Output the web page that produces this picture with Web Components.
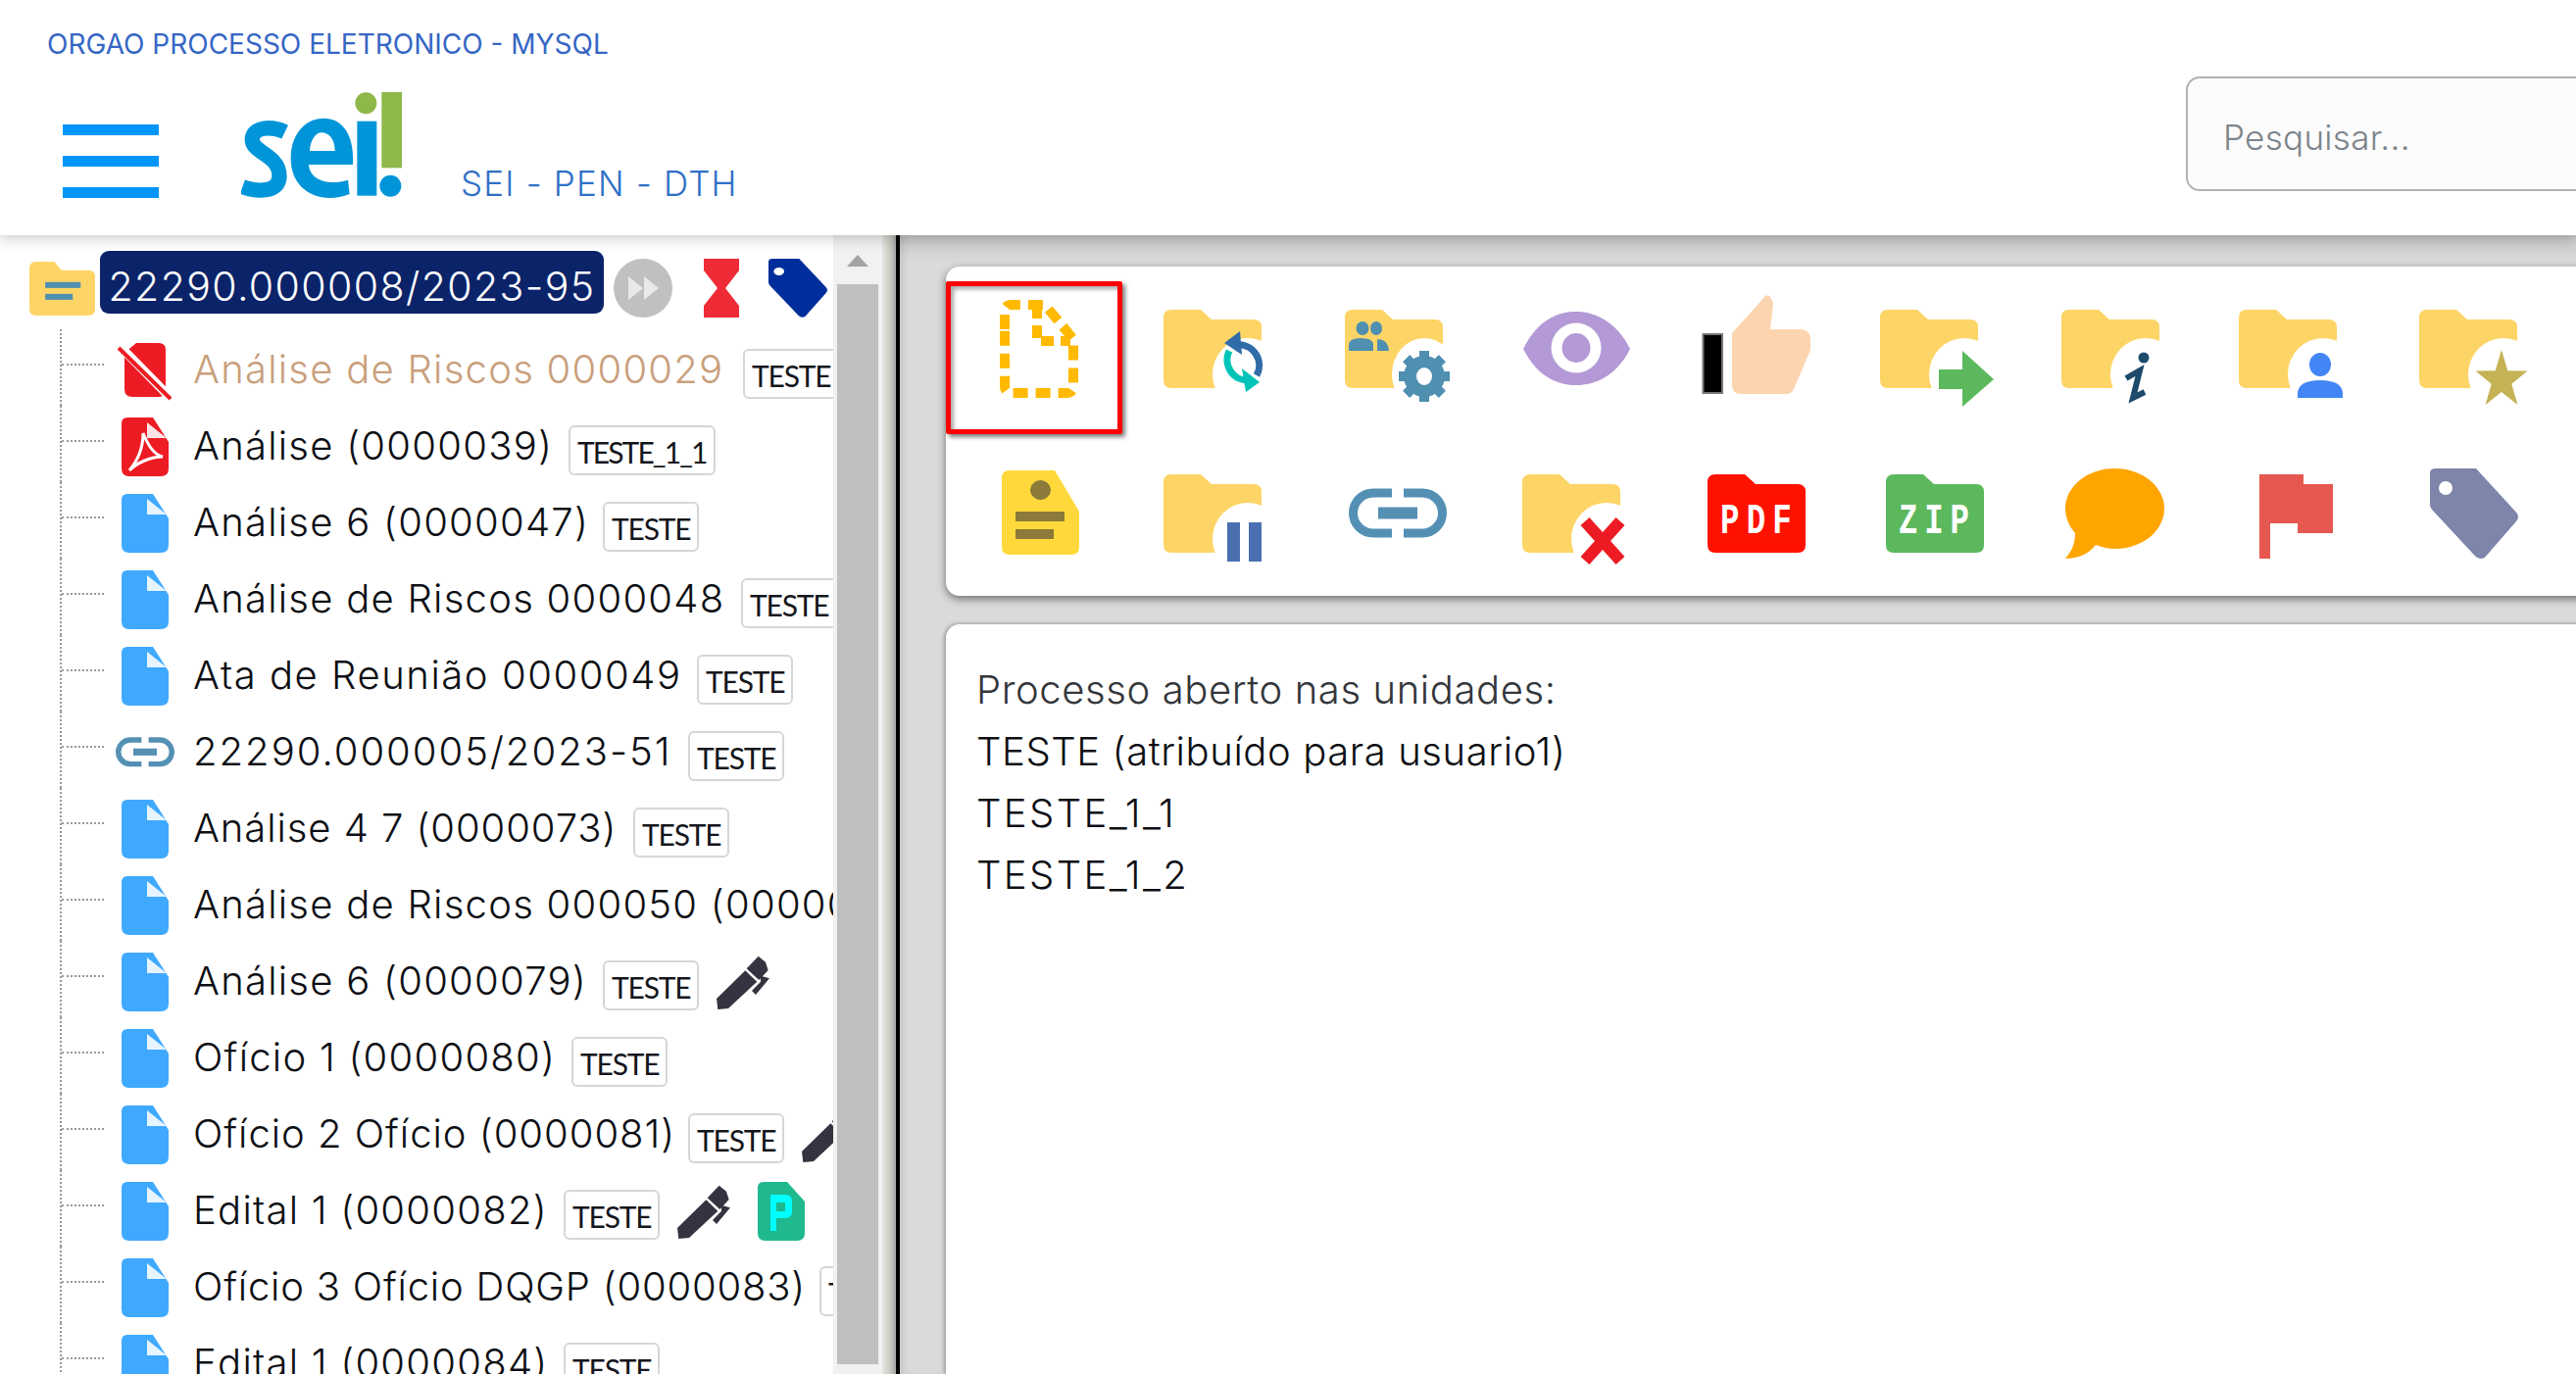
<!DOCTYPE html>
<html lang="pt-BR"><head><meta charset="utf-8"><title>SEI</title>
<style>html,body{margin:0;height:100%;overflow:hidden;background:#fff;font-family:Inter,"Liberation Sans",sans-serif}</style>
</head><body>
<sei-app>
  <sei-header slot="header"></sei-header>
  <sei-tree slot="tree" root="22290.000008/2023-95">
    <tree-row icon="slash" label="Análise de Riscos 0000029" muted w="541"><sei-badge>TESTE</sei-badge></tree-row>
    <tree-row icon="pdf" label="Análise (0000039)" w="363"><sei-badge style="letter-spacing:-1.9px">TESTE_1_1</sei-badge></tree-row>
    <tree-row icon="doc" label="Análise 6 (0000047)" w="398"><sei-badge>TESTE</sei-badge></tree-row>
    <tree-row icon="doc" label="Análise de Riscos 0000048" w="539"><sei-badge>TESTE</sei-badge></tree-row>
    <tree-row icon="doc" label="Ata de Reunião 0000049" w="494" ls="1.55"><sei-badge>TESTE</sei-badge></tree-row>
    <tree-row icon="link" label="22290.000005/2023-51" w="485" ls="2"><sei-badge>TESTE</sei-badge></tree-row>
    <tree-row icon="doc" label="Análise 4 7 (0000073)" w="429" ls=".93"><sei-badge>TESTE</sei-badge></tree-row>
    <tree-row icon="doc" label="Análise de Riscos 000050 (0000074)" w="720"><sei-badge>TESTE</sei-badge></tree-row>
    <tree-row icon="doc" label="Análise 6 (0000079)" w="398"><sei-badge>TESTE</sei-badge><sei-icon name="pen"></sei-icon></tree-row>
    <tree-row icon="doc" label="Ofício 1 (0000080)" w="366"><sei-badge>TESTE</sei-badge></tree-row>
    <tree-row icon="doc" label="Ofício 2 Ofício (0000081)" w="485" ls=".98"><sei-badge>TESTE</sei-badge><sei-icon name="pen"></sei-icon></tree-row>
    <tree-row icon="doc" label="Edital 1 (0000082)" w="358"><sei-badge>TESTE</sei-badge><sei-icon name="pen"></sei-icon><sei-icon name="p"></sei-icon></tree-row>
    <tree-row icon="doc" label="Ofício 3 Ofício DQGP (0000083)" w="619" ls=".8"><sei-badge>TESTE</sei-badge></tree-row>
    <tree-row icon="doc" label="Edital 1 (0000084)" w="358"><sei-badge>TESTE</sei-badge></tree-row>
  </sei-tree>
  <sei-tools slot="main"></sei-tools>
  <sei-info slot="main">
    <p>Processo aberto nas unidades:</p>
    <p class="k">TESTE (atribuído para usuario1)</p>
    <p class="k" style="letter-spacing:2.4px">TESTE_1_1</p>
    <p class="k" style="letter-spacing:2.4px">TESTE_1_2</p>
  </sei-info>
</sei-app>
<script>
const FOLDER='<path d="M8 0H38L49 10H92Q100 10 100 18V72Q100 80 92 80H8Q0 80 0 72V8Q0 0 8 0Z" fill="COLOR"/>';
const folder=(x,y,badge,c='#fdd567',cut=true)=>`<g transform="translate(${x} ${y})">${FOLDER.replace('COLOR',c)}${cut?'<ellipse cx="86" cy="66" rx="36" ry="37" fill="#fff"/>':''}${badge||''}</g>`;
const tagPath='M0 6Q0 0 6 0H47L88 58Q92 64 88 70L56 118Q50 122 46 116L3 56Q0 52 0 48Z';
let gear='';
for(let a=0;a<360;a+=45)gear+=`<rect x="76" y="42" width="10" height="12" fill="#4f8fb0" transform="rotate(${a} 81 68)"/>`;
const star=(()=>{let p=[];for(let i=0;i<10;i++){const r=i%2?12:31,a=-Math.PI/2+i*Math.PI/5;p.push((84+r*Math.cos(a)*.9).toFixed(1)+','+(72+r*Math.sin(a)).toFixed(1));}return p.join(' ');})();
const TOOL={
 newdoc:`<g transform="translate(20 6)" fill="none" stroke="#ffb900" stroke-width="10"><path stroke-dasharray="15 8" d="M5 30V12Q5 5 12 5H46L75 40V88Q75 95 68 95H12Q5 95 5 88Z"/><path stroke-dasharray="13 7" d="M38 6V42H72"/></g>`,
 sync:folder(4,16,'<g fill="none" stroke-width="7"><path d="M74 36A21 21 0 0 1 95 67" stroke="#2f6ca8"/><path d="M88 72A21 21 0 0 1 67 42" stroke="#00c4b8"/></g><path d="M78 22L80 46L62 34Z" fill="#2f6ca8"/><path d="M84 84L80 60L98 74Z" fill="#00c4b8"/>'),
 users:`<g transform="translate(6 16)">${FOLDER.replace('COLOR','#fdd567')}<ellipse cx="81" cy="66" rx="33" ry="37" fill="#fff"/><g fill="#4f8fb0"><ellipse cx="18" cy="19" rx="6.5" ry="7"/><ellipse cx="32" cy="19" rx="6" ry="7"/><path d="M4 42V36Q4 29 16 29Q29 29 29 36V42Z"/><path d="M33 42V30Q44 30 45 42Z"/>${gear}<circle cx="81" cy="68" r="21"/></g><ellipse cx="81" cy="68" rx="8" ry="9" fill="#fff"/></g>`,
 eye:`<path d="M5 56C20 25 42 18 59 18C78 18 100 28 114 56C100 84 78 93 59 93C42 93 20 86 5 56Z" fill="#b39ad6"/><circle cx="59" cy="55" r="25.5" fill="#fff"/><ellipse cx="59" cy="55" rx="14.5" ry="15" fill="#b39ad6"/>`,
 thumb:`<rect x="5.5" y="41" width="19.5" height="60" fill="#000" stroke="#777" stroke-width="2"/><path d="M35 40L69 2Q72 0 74 3L77 9L74 36H104Q115 36 115 47V57L98 97Q96 102 90 102H44Q35 102 35 93Z" fill="#fcd5b0"/>`,
 move:folder(3,16,'<path d="M60 61H84V42L116 71L84 99V81H60Z" fill="#5cb85c"/>'),
 info:folder(5,16,'<circle cx="84" cy="49" r="5.5" fill="#1e4a6b"/><path d="M66 70L80 62L73 90L85 84" fill="none" stroke="#1e4a6b" stroke-width="6"/>'),
 person:folder(3,16,'<ellipse cx="83" cy="56" rx="11" ry="12" fill="#4285f4"/><path d="M60 90V86Q60 72 83 72Q106 72 106 86V90Z" fill="#4285f4"/>'),
 star:folder(4,16,`<polygon points="${star}" fill="#c4b255"/>`),
 note:`<g transform="translate(22 12)"><path d="M8 0H54L79 42V78Q79 86 71 86H8Q0 86 0 78V8Q0 0 8 0Z" fill="#ffd93b"/><ellipse cx="39.5" cy="20" rx="10.5" ry="10" fill="#8b7a3a"/><rect x="14" y="42" width="50" height="10" fill="#8b7a3a"/><rect x="14" y="60" width="39" height="10" fill="#8b7a3a"/></g>`,
 pause:folder(4,16,'<rect x="65" y="49" width="13" height="40" fill="#4a6fb0"/><rect x="87" y="49" width="13" height="40" fill="#4a6fb0"/>'),
 link:`<g transform="translate(10 30)" fill="none" stroke="#5490b4" stroke-width="9"><path d="M44 5H25A20 20 0 0 0 25 46H44"/><path d="M56 5H75A20 20 0 0 1 75 46H56"/><path d="M30 25.5H70" stroke-width="12"/></g>`,
 del:folder(4,16,'<path d="M64 48L100 88M100 48L64 88" stroke="#ed1c24" stroke-width="12" fill="none"/>'),
 pdf:`<g transform="translate(10 16)">${FOLDER.replace('COLOR','#ff1100')}<text transform="translate(13 60) scale(.72 1)" font-family="Liberation Mono" font-weight="700" font-size="45" fill="#fff" textLength="101" lengthAdjust="spacing">PDF</text></g>`,
 zip:`<g transform="translate(9 16)">${FOLDER.replace('COLOR','#5cb85c')}<text transform="translate(13 60) scale(.72 1)" font-family="Liberation Mono" font-weight="700" font-size="45" fill="#fff" textLength="100" lengthAdjust="spacing">ZIP</text></g>`,
 chat:`<path d="M59.5 10C87 10 110 28 110 51C110 74 87 92 60 92C52 92 46 90 40 88C33 97 22 102 9 102C16 94 19 86 19 76C13 69 9 60 9 51C9 28 32 10 59.5 10Z" fill="#ffa500"/>`,
 flag:`<path d="M24 16H69V26H99V76H63V66H35V102H24Z" fill="#e5574f"/>`,
 tag:`<g transform="translate(15 10) scale(1 .77)"><path d="${tagPath}" fill="#7e84aa"/><ellipse cx="16" cy="26" rx="7" ry="9" fill="#fff"/></g>`
};
const ICON={
 doc:{w:48,h:60,s:`<path d="M6 0H32L48 25V52Q48 60 40 60H8Q0 60 0 52V6Q0 0 6 0Z" fill="#3fa9ff"/><path d="M26 5V21H46Z" fill="#e6f4ff"/>`},
 pdf:{w:48,h:60,s:`<path d="M6 0H32L48 25V52Q48 60 40 60H8Q0 60 0 52V6Q0 0 6 0Z" fill="#ed1c24"/><path d="M26 5V21H46Z" fill="#fde4e4"/><path d="M22 16C22 28 18 42 8 54C16 46 30 40 42 40C32 38 26 26 22 16Z" fill="none" stroke="#fff" stroke-width="3"/>`},
 slash:{w:48,h:60,s:`<path d="M15 2H38Q45 2 45 9V50Q45 57 38 57H11Q3 57 3 49V12Z" fill="#ed1c24"/><path d="M-1 6L52 60" stroke="#fff" stroke-width="9"/><path d="M-3 7L50 59" stroke="#ed1c24" stroke-width="4"/>`},
 link:{w:60,h:60,vb:'0 0 60 60',s:`<g transform="translate(0 14) scale(.6)" fill="none" stroke="#5490b4" stroke-width="9"><path d="M44 5H25A20 20 0 0 0 25 46H44"/><path d="M56 5H75A20 20 0 0 1 75 46H56"/><path d="M30 25.5H70" stroke-width="12"/></g>`,m:'0 -6px'},
 pen:{w:54,h:55,vb:'0 0 162 165',s:`<g fill="#33343f"><path d="M0 132L88 46L124 80L36 162L4 165Z"/><path d="M92 40L128 2L150 20L158 45L130 75Z"/><path d="M135 62L162 70L120 120L108 108L135 80Z"/></g>`,m:'3px 0 0 18px'},
 p:{w:48,h:60,s:`<path d="M6 0H30L48 20V52Q48 60 40 60H8Q0 60 0 52V6Q0 0 6 0Z" fill="#1fb88f"/><path d="M13 50V13H28Q35 13 35 20V30Q35 37 28 37H19V50Z" fill="#0ff" fill-rule="evenodd"/><rect x="19" y="21" width="9" height="9" fill="#1fb88f"/>`,m:'0 0 0 28px'}
};
function shadow(el,html){el.attachShadow({mode:'open'}).innerHTML=html;}
customElements.define('sei-icon',class extends HTMLElement{
 connectedCallback(){const i=ICON[this.getAttribute('name')];
  shadow(this,`<style>:host{display:block;flex:none;line-height:0;margin:${i.m||0}}svg{overflow:visible}</style><svg width="${i.w}" height="${i.h}" viewBox="${i.vb||`0 0 ${i.w} ${i.h}`}">${i.s}</svg>`);}
});
customElements.define('sei-badge',class extends HTMLElement{
 constructor(){super();shadow(this,`<style>:host{display:block;flex:none;box-sizing:border-box;height:51px;margin:8px 0 0 0;padding:0 7px;border:2px solid #d6d6d6;border-radius:6px;font-family:Lato,sans-serif;font-size:30px;line-height:50px;color:#14161c;letter-spacing:-1.2px;white-space:nowrap;background:#fff}</style><slot></slot>`);}
});
customElements.define('tree-row',class extends HTMLElement{
 connectedCallback(){const m=this.hasAttribute('muted');
  shadow(this,`<style>:host{display:flex;align-items:flex-start;box-sizing:border-box;height:78px;margin-left:61px;padding-top:12px;border-left:2px dotted #999;overflow:hidden;white-space:nowrap}
  .c{flex:none;width:43px;margin:23px 18px 0 0;border-top:2px dotted #999}
  .t{flex:none;margin:-1px 0 0 25px;font-size:40px;line-height:60px;font-weight:300;color:${m?'#c99f7c':'#0d0f14'};width:${this.getAttribute('w')}px;letter-spacing:${this.getAttribute('ls')||1.25}px}
  ::slotted(sei-badge){margin-left:20px}</style>
  <span class="c"></span><sei-icon name="${this.getAttribute('icon')}"></sei-icon><span class="t">${this.getAttribute('label')}</span><slot></slot>`);}
});
customElements.define('sei-tree',class extends HTMLElement{
 connectedCallback(){shadow(this,`<style>:host{display:flex;width:900px;flex:none;height:100%;background:#fff}
 .body{width:850px;flex:none;overflow:hidden;padding-top:16px;box-sizing:border-box}
 .root{display:flex;align-items:flex-start;height:80px;padding-left:30px}
 .num{margin-left:5px;height:64px;width:514px;box-sizing:border-box;background:#0a2369;border-radius:9px;color:#fff;font-size:41px;font-weight:300;line-height:72px;text-align:center;white-space:nowrap;letter-spacing:1.4px;overflow:hidden}
 .root svg{flex:none}
 .bar{flex:1;background:#f1f1f1;display:flex;flex-direction:column;align-items:center;padding:0 4px 10px}
 .up{height:50px;flex:none;display:flex;align-items:flex-start;padding-top:20px;box-sizing:border-box}
 .tri{width:0;height:0;border:solid transparent;border-width:0 11px 12px;border-bottom-color:#a3a3a3}
 .th{flex:1;align-self:stretch;background:#bfbfbf}
 </style>
 <div class="body"><div class="root">
 <svg width="67" height="55" viewBox="0 0 100 82" style="margin-top:11px"><path d="M10 0H38L49 13H90Q100 13 100 23V72Q100 82 90 82H10Q0 82 0 72V10Q0 0 10 0Z" fill="#fdd567"/><rect x="24" y="31" width="54" height="9" fill="#4f8fb0"/><rect x="24" y="49" width="42" height="9" fill="#4f8fb0"/></svg>
 <div class="num">${this.getAttribute('root')}</div>
 <svg width="60" height="60" viewBox="0 0 60 60" style="margin:8px 0 0 10px"><circle cx="30" cy="30" r="30" fill="#c0c0c0"/><path d="M15 18L30 30L15 42ZM31 18L46 30L31 42Z" fill="#e9e9e9"/></svg>
 <svg width="36" height="60" viewBox="0 0 36 60" style="margin:8px 0 0 32px"><path d="M0 0H36V12L22 30L36 48V60H0V48L14 30L0 12Z" fill="#ef2b38"/></svg>
 <svg width="60" height="60" viewBox="0 0 90 120" preserveAspectRatio="none" style="margin:8px 0 0 30px"><path d="${tagPath}" fill="#002d9c"/><ellipse cx="16" cy="26" rx="8" ry="8" fill="#fff"/></svg>
 </div><slot></slot></div>
 <div class="bar"><div class="up"><div class="tri"></div></div><div class="th"></div></div>`);}
});
customElements.define('sei-header',class extends HTMLElement{
 constructor(){super();shadow(this,`<style>:host{display:flex;height:240px;background:#fff;position:relative;z-index:2;box-shadow:0 3px 14px rgba(0,0,0,.22);overflow:hidden;clip-path:inset(0 0 -30px 0)}
 .l{flex:1;padding:27px 0 0 48px;min-width:0}
 .org{font-size:28px;line-height:36px;color:#3566c4;white-space:nowrap}
 .row{display:flex;align-items:flex-start;margin:31px 0 0 16px}
 .ham{display:flex;flex-direction:column;gap:21px;width:98px;margin-top:33px}.ham i{display:block;height:11px;background:#0095f9}
 .logo{margin-left:84px;flex:none}
 .title{margin:71px 0 0 60px;font-size:35px;font-weight:300;line-height:44px;color:#2f6fc6;white-space:nowrap;letter-spacing:1.2px}
 .s{flex:none;box-sizing:border-box;width:500px;height:117px;margin:78px -102px 0 0;background:#fcfcfc;border:2px solid #aeb3b6;border-radius:14px;padding-left:36px;font-size:35px;line-height:120px;color:#7d848b;font-weight:300;letter-spacing:.3px}
 </style>
 <div class="l"><div class="org">ORGAO PROCESSO ELETRONICO - MYSQL</div>
 <div class="row"><div class="ham"><i></i><i></i><i></i></div>
 <svg class="logo" width="164" height="110" viewBox="48 28 492 330"><path d="M182 150C140 130 80 135 82 175C84 215 165 220 165 285C165 335 100 335 52 318" fill="none" stroke="#0095d9" stroke-width="46"/><path fill-rule="evenodd" d="M390 250H255C258 300 320 315 375 297L380 340C290 375 200 330 200 232C200 150 250 108 300 108C360 108 395 160 390 250ZM258 208H335C335 170 315 152 295 152C275 152 260 175 258 208Z" fill="#0095d9"/><rect x="403" y="117" width="60" height="228" fill="#0095d9"/><circle cx="430" cy="62" r="33" fill="#8fb84a"/><rect x="478" y="28" width="62" height="232" fill="#8fb84a"/><circle cx="505" cy="315" r="33" fill="#0095d9"/></svg>
 <div class="title">SEI - PEN - DTH</div></div></div>
 <div class="s">Pesquisar...</div>`);}
});
customElements.define('sei-tools',class extends HTMLElement{
 connectedCallback(){const names=['newdoc','sync','users','eye','thumb','move','info','person','star','note','pause','link','del','pdf','zip','chat','flag','tag'];
 shadow(this,`<style>:host{display:grid;grid-template-columns:repeat(9,183px);grid-template-rows:156px 153px;row-gap:12px;align-content:start;width:1800px;height:336px;box-sizing:border-box;padding-top:15px;background:#fff;border-radius:14px 0 0 14px;box-shadow:0 3px 8px rgba(0,0,0,.5);flex:none}
 .c{box-sizing:border-box;padding:13px 0 0 35px;height:100%;line-height:0}
 .sel{width:180px;border:5px solid #f00;border-radius:2px;padding:8px 0 0 30px;box-shadow:3px 3px 4px rgba(0,0,0,.5),inset 3px 3px 4px rgba(0,0,0,.35)}
 svg{overflow:visible}</style>`+names.map((n,i)=>`<div class="c${i?'':' sel'}"><svg width="120" height="120" viewBox="0 0 120 120">${TOOL[n]}</svg></div>`).join(''));}
});
customElements.define('sei-info',class extends HTMLElement{
 constructor(){super();shadow(this,`<style>:host{display:block;width:1800px;flex:1;margin-top:29px;box-sizing:border-box;padding:35px 0 0 31px;background:#fff;border-radius:14px 0 0 0;box-shadow:-1px 0 4px rgba(0,0,0,.4)}
 ::slotted(p){margin:0;font-size:40px;font-weight:300;line-height:63px;color:#33363b;letter-spacing:.6px}
 ::slotted(p.k){color:#0d0f14}</style><slot></slot>`);}
});
customElements.define('sei-app',class extends HTMLElement{
 constructor(){super();shadow(this,`<style>:host{display:flex;flex-direction:column;height:1402px;width:2628px;overflow:hidden}
 .m{flex:1;display:flex;min-height:0}
 .split{flex:none;width:18px;background:linear-gradient(90deg,#e6e6e0,#cfcfc8 40%,#a9a9a9 75%,#000 78%,#000)}
 .r{flex:1;min-width:0;display:flex;flex-direction:column;padding:32px 0 0 47px;overflow:hidden;background:linear-gradient(180deg,#c9c9c9,#dadada 28px);box-shadow:inset 6px 0 8px -4px rgba(0,0,0,.12)}</style>
 <slot name="header"></slot><div class="m"><slot name="tree"></slot><div class="split"></div><div class="r"><slot name="main"></slot></div></div>`);}
});
</script>
</body></html>
